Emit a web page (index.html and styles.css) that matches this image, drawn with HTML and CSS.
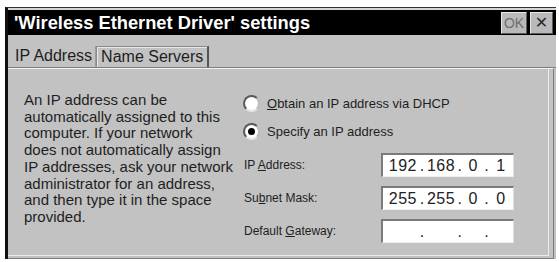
FILE: index.html
```html
<!DOCTYPE html>
<html>
<head>
<meta charset="utf-8">
<link rel="stylesheet" href="styles.css">
</head>
<body>
<div class="window">
  <div class="titlebar">
    <div class="title">'Wireless Ethernet Driver' settings</div>
    <div class="tbtn ok">OK</div>
    <div class="tbtn close">&#x2715;</div>
  </div>
  <div class="tabs">
    <div class="tab active">IP Address</div>
    <div class="tab">Name Servers</div>
  </div>
  <div class="sheet">
    <p class="desc">An IP address can be<br>automatically assigned to this<br>computer. If your network<br>does not automatically assign<br>IP addresses, ask your network<br>administrator for an address,<br>and then type it in the space<br>provided.</p>
    <div class="settings">
      <div class="radios">
        <label class="radio-row"><span class="radio"></span><span><u>O</u>btain an IP address via DHCP</span></label>
        <label class="radio-row"><span class="radio checked"></span><span>Specify an IP address</span></label>
      </div>
      <div class="fields">
        <span class="flabel">IP <u>A</u>ddress:</span>
        <div class="ipbox"><span class="f1">192</span><span class="dot">.</span><span class="f2">168</span><span class="dot">.</span><span class="f3">0</span><span class="dot">.</span><span class="f4">1</span></div>
        <span class="flabel">Su<u>b</u>net Mask:</span>
        <div class="ipbox"><span class="f1">255</span><span class="dot">.</span><span class="f2">255</span><span class="dot">.</span><span class="f3">0</span><span class="dot">.</span><span class="f4">0</span></div>
        <span class="flabel">Default <u>G</u>ateway:</span>
        <div class="ipbox"><span class="f1"></span><span class="dot">.</span><span class="f2"></span><span class="dot">.</span><span class="f3"></span><span class="dot">.</span><span class="f4"></span></div>
      </div>
    </div>
  </div>
</div>
</body>
</html>
```
FILE: styles.css
```css
html, body {
  margin: 0;
  padding: 0;
  background: #ffffff;
}
body {
  font-family: "Liberation Sans", Arial, sans-serif;
  color: #1e1e1e;
}
.window {
  margin: 7px 3px 0 5px;
  height: 252px;
  background: #c2c2c2;
  border-top: 1px solid #333;
  border-left: 3px solid #111;
  display: flex;
  flex-direction: column;
  box-sizing: border-box;
}
.titlebar {
  height: 27px;
  border-top: 2px solid #d6d6d6;
  background: #000;
  display: flex;
  align-items: center;
  gap: 3px;
  padding: 0 3px 0 6px;
  box-sizing: border-box;
}
.title {
  flex: 1;
  color: #fff;
  font-weight: bold;
  font-size: 18.3px;
  white-space: nowrap;
}
.tbtn {
  width: 25px;
  height: 22px;
  box-sizing: border-box;
  background: #b9b9b9;
  border: 1px solid;
  border-color: #e6e6e6 #5c5c5c #5c5c5c #e6e6e6;
  display: flex;
  align-items: center;
  justify-content: center;
  font-size: 14px;
}
.tbtn.ok {
  width: 26px;
  color: #6e6e6e;
}
.tbtn.close {
  width: 23px;
  color: #2a2a2a;
  font-size: 16px;
  font-family: "DejaVu Sans", sans-serif;
}
.tabs {
  height: 32px;
  display: flex;
  align-items: flex-end;
  padding-left: 1px;
  border-bottom: 1px solid #7c7c7c;
  font-size: 16px;
}
.tab {
  height: 20px;
  line-height: 19px;
  padding: 0 4px 0 4px;
  border: 1px solid #8a8a8a;
  border-right: 2px solid #555;
  border-bottom: none;
  box-shadow: inset 1px 1px 0 #e8e8e8;
}
.tab.active {
  border: none;
  box-shadow: none;
  padding: 0 3px 0 6px;
  height: 21px;
  border-right: 1px solid #9a9a9a;
}
.sheet {
  flex: 1;
  display: grid;
  grid-template-columns: 219px 1fr;
  padding: 20px 0 0 16px;
  border-top: 1px solid #f2f2f2;
  border-right: 1px solid #7c7c7c;
  border-bottom: 1px solid #7c7c7c;
  box-shadow: inset -4px -2px 0 #c2c2c2, inset -5px -3px 0 #ececec;
  margin-right: 2px;
}
.desc {
  margin: 3px 0 0 0;
  font-size: 15px;
  line-height: 16.7px;
}
.radios {
  display: flex;
  flex-direction: column;
  font-size: 13px;
}
.radio-row {
  height: 28px;
  display: flex;
  align-items: center;
  gap: 7px;
}
.radio {
  width: 17px;
  height: 17px;
  box-sizing: border-box;
  border-radius: 50%;
  background: #fff;
  border: 2px solid;
  border-color: #5a5a5a #bdbdbd #e6e6e6 #5a5a5a;
  display: flex;
  align-items: center;
  justify-content: center;
}
.radio.checked::after {
  content: "";
  width: 7px;
  height: 7px;
  border-radius: 50%;
  background: #000;
}
.fields {
  margin-top: 8px;
  display: grid;
  grid-template-columns: 138px 133px;
  row-gap: 9px;
  align-items: center;
  font-size: 12px;
}
.flabel {
  padding-left: 1px;
}
.ipbox {
  height: 24px;
  box-sizing: border-box;
  background: #fff;
  border-top: 2px solid #7a7a7a;
  border-left: 2px solid #7a7a7a;
  border-right: 1px solid #dcdcdc;
  border-bottom: 1px solid #efefef;
  display: flex;
  align-items: center;
  font-size: 16px;
  letter-spacing: 0.5px;
  padding-left: 3px;
  color: #222;
}
.ipbox span {
  text-align: center;
  white-space: pre;
}
.f1 { width: 34px; }
.f2 { width: 33px; }
.f3 { width: 22px; }
.f4 { width: 24px; }
.dot { width: 5px; }
```
